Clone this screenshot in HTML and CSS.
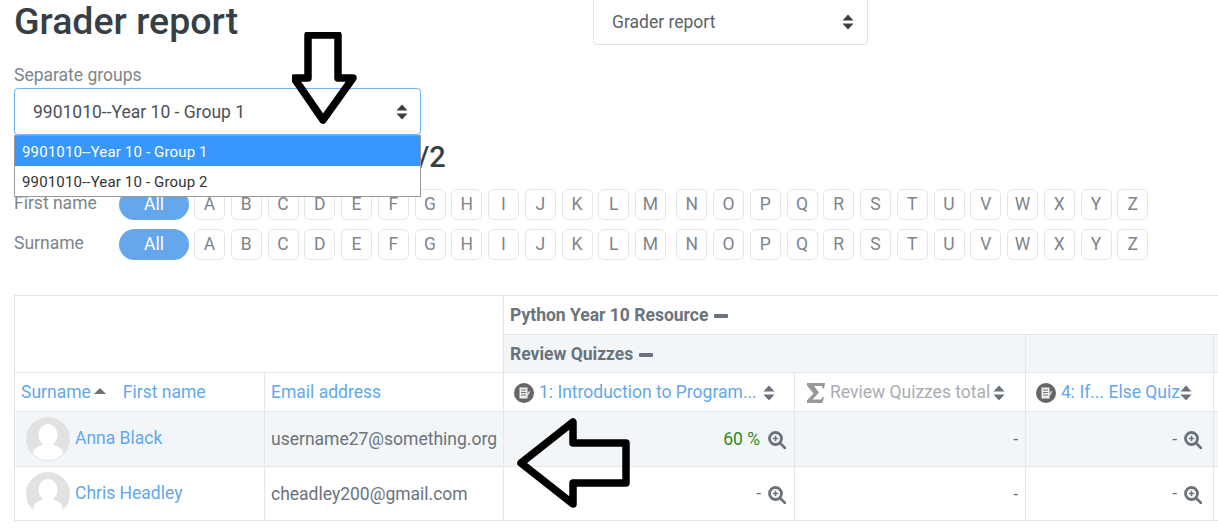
FILE: index.html
```html
<!DOCTYPE html>
<html lang="en">
<head>
<meta charset="utf-8">
<title>Grader report</title>
<link rel="stylesheet" href="styles.css">
</head>
<body>
<svg class="defs" width="0" height="0">
  <defs>
    <symbol id="sort" viewBox="0 0 12 16"><path d="M6 0.5 11.5 6.5H0.5ZM6 15.5 0.5 9.5H11.5Z"/></symbol>
    <symbol id="zoom" viewBox="0 0 18 18"><circle cx="7.5" cy="7.5" r="6" fill="none" stroke="#6a737b" stroke-width="2.800"/><path d="M12 12 17 17" stroke="#6a737b" stroke-width="2.600" stroke-linecap="round"/><path d="M7.500 4.800v5.400M4.800 7.500h5.400" stroke="#6a737b" stroke-width="1.600"/></symbol>
    <symbol id="quiz" viewBox="0 0 20 20"><circle cx="10" cy="10" r="10" fill="#666"/><path d="M5.500 4.500h8v11h-8z" fill="#eee"/><path d="M7 7h5M7 9.500h5M7 12h5" stroke="#777" stroke-width="1.200"/><path d="M11.500 13.500 15 8l1.300.8-3.500 5.500z" fill="#ddd"/></symbol>
    <symbol id="sigma" viewBox="0 0 18 20"><path d="M0 0H18L17 5.500H15.500L14.800 3H7L12 9.500 5.500 16.500H14L15.500 14H17L15.500 20H0V17.200L6.500 10.500 0 2.500Z"/></symbol>
    <symbol id="avatar" viewBox="0 0 44 44"><circle cx="22" cy="22" r="22" fill="#e2e2e2"/><ellipse cx="22" cy="18" rx="9.500" ry="11" fill="#fff"/><path d="M7 37c0-6 7-10 15-10s15 4 15 10a22 22 0 0 1-30 0z" fill="#fff"/></symbol>
  </defs>
</svg>

<div class="page">
  <header class="top">
    <h1>Grader report</h1>
    <div class="report-select">Grader report <svg class="sort dark"><use href="#sort"/></svg></div>
  </header>

  <div class="group-block">
    <div class="group-label">Separate groups</div>
    <div class="group-select">9901010--Year 10 - Group 1 <svg class="sort dark"><use href="#sort"/></svg></div>
    <ul class="group-menu">
      <li class="on">9901010--Year 10 - Group 1</li>
      <li>9901010--Year 10 - Group 2</li>
    </ul>
  </div>

  <h2>/2</h2>

  <div class="initials first">
    <span class="init-label">First name</span>
    <a class="all">All</a>
    <span class="letters"><a>A</a><a>B</a><a>C</a><a>D</a><a>E</a><a>F</a><a>G</a><a>H</a><a>I</a><a>J</a><a>K</a><a>L</a><a>M</a><a>N</a><a>O</a><a>P</a><a>Q</a><a>R</a><a>S</a><a>T</a><a>U</a><a>V</a><a>W</a><a>X</a><a>Y</a><a>Z</a></span>
  </div>
  <div class="initials">
    <span class="init-label">Surname</span>
    <a class="all">All</a>
    <span class="letters"><a>A</a><a>B</a><a>C</a><a>D</a><a>E</a><a>F</a><a>G</a><a>H</a><a>I</a><a>J</a><a>K</a><a>L</a><a>M</a><a>N</a><a>O</a><a>P</a><a>Q</a><a>R</a><a>S</a><a>T</a><a>U</a><a>V</a><a>W</a><a>X</a><a>Y</a><a>Z</a></span>
  </div>

  <div class="table-wrap">
    <table class="grades">
      <colgroup><col class="c1"><col class="c2"><col class="c3"><col class="c4"><col class="c5"><col class="c6"></colgroup>
      <tr class="r1">
        <td colspan="2" rowspan="2"></td>
        <th colspan="4" class="cat">Python Year 10 Resource <span class="minus"></span></th>
      </tr>
      <tr class="r2 shade">
        <th colspan="2" class="cat">Review Quizzes <span class="minus"></span></th>
        <th></th><th></th>
      </tr>
      <tr class="r3">
        <td class="names"><a>Surname</a><i class="up"></i><a class="fn">First name</a></td>
        <td><a>Email address</a></td>
        <td class="item"><svg class="qi"><use href="#quiz"/></svg><a>1: Introduction to Program...</a><svg class="sort s1"><use href="#sort"/></svg></td>
        <td class="item total"><svg class="sigma"><use href="#sigma"/></svg><span class="muted">Review Quizzes total</span><svg class="sort s2"><use href="#sort"/></svg></td>
        <td class="item"><svg class="qi"><use href="#quiz"/></svg><a>4: If... Else Quiz</a><svg class="sort s3"><use href="#sort"/></svg></td>
        <td></td>
      </tr>
      <tr class="r4 shade">
        <td class="user"><svg class="av"><use href="#avatar"/></svg><a>Anna Black</a></td>
        <td>username27@something.org</td>
        <td class="grade"><span class="pass">60 %</span><svg class="zm"><use href="#zoom"/></svg></td>
        <td class="grade plain">-</td>
        <td class="grade wide">-<svg class="zm"><use href="#zoom"/></svg></td>
        <td></td>
      </tr>
      <tr class="r5">
        <td class="user"><svg class="av cut" viewBox="0 0 44 38"><use href="#avatar" width="44" height="44"/></svg><a>Chris Headley</a></td>
        <td>cheadley200@gmail.com</td>
        <td class="grade">-<svg class="zm"><use href="#zoom"/></svg></td>
        <td class="grade plain">-</td>
        <td class="grade wide">-<svg class="zm"><use href="#zoom"/></svg></td>
        <td></td>
      </tr>
    </table>
  </div>
</div>

<svg class="arrow-down" viewBox="0 0 70 96" aria-hidden="true"><path d="M16 3H46V46H61L31 88 2 46H16Z"/></svg>
<svg class="arrow-left" viewBox="0 0 116 90" aria-hidden="true"><path d="M4 45 56 4V25H109V65H56V86Z"/></svg>
</body>
</html>
```
FILE: styles.css
```css
* { box-sizing: border-box; }
html, body { margin: 0; height: 528px; overflow: hidden; background: #fff; }
body { font-family: Roboto, "Liberation Sans", sans-serif; font-size: 17.500px; color: #6a737b; position: relative; }
.defs { position: absolute; }
a { color: #64a7ec; }
.page { padding-left: 14px; }

.top { display: flex; height: 46px; align-items: flex-start; }
h1 { margin: 0; width: 579px; font-size: 37.500px; line-height: 43px; font-weight: 500; color: #373f46; }
.report-select { width: 275px; height: 46px; margin-top: -1px; padding: 0 13px 0 18px; border: 1px solid #dfe3e6; border-radius: 0 0 4px 4px; display: flex; align-items: center; justify-content: space-between; color: #5a6268; }

.group-block { position: relative; width: 407px; margin-top: 17px; }
.group-label { line-height: 24px; color: #7d858c; }
.group-select { margin-top: 1px; height: 47px; padding: 0 12px 0 18px; border: 1px solid #6cb6fb; border-radius: 4px; display: flex; align-items: center; justify-content: space-between; color: #4a5157; box-shadow: 0 0 1px #a9d4fd; }
.group-menu { position: absolute; z-index: 2; left: 0; top: 72px; width: 407px; margin: 0; padding: 0; list-style: none; background: #fff; border: 1px solid #9a9a9a; font-size: 15px; letter-spacing: .15px; color: #333; }
.group-menu li { height: 30px; line-height: 32px; padding-left: 7px; }
.group-menu li.on { background: #3797fe; color: #fff; }
.sort { width: 12px; height: 16px; flex: none; fill: #6a737b; }
.sort.dark { fill: #3a3f44; }

h2 { margin: 0; padding-left: 404px; font-size: 29px; line-height: 34px; height: 54px; padding-top: 5px; font-weight: 500; color: #373f46; }

.initials { display: flex; align-items: center; height: 31px; margin-bottom: 9px; }
.init-label { width: 105px; color: #7d858c; position: relative; top: -2px; }
.all { width: 70px; height: 31px; line-height: 31px; border-radius: 16px; background: #64a7ec; color: #fff; text-align: center; }
.letters { display: flex; gap: 5.760px; margin-left: 5px; }
.letters a { width: 31px; height: 31px; line-height: 29px; text-align: center; border: 1px solid #e3e7ea; border-radius: 6px; color: #7d858c; }
.letters a:nth-child(13) { margin-right: 4.500px; }

.table-wrap { margin-top: 35px; overflow: hidden; width: 1204px; }
.grades { border-collapse: collapse; table-layout: fixed; width: 1250px; }
.c1 { width: 250px; } .c2 { width: 239px; } .c3 { width: 291px; } .c4 { width: 231px; } .c5 { width: 188px; } .c6 { width: 51px; }
.grades td, .grades th { border: 1px solid #e3e7ea; padding: 0 6px; white-space: nowrap; overflow: hidden; text-align: left; font-weight: 400; }
.r1 { height: 39px; } .r2 { height: 38px; } .r3 { height: 39px; } .r4 { height: 55px; } .r5 { height: 54px; }
.shade td, .shade th { background: #f3f6f9; }
.grades th.cat { font-weight: 700; }
.minus { display: inline-block; width: 14px; height: 4px; background: #6a737b; vertical-align: middle; margin-left: 1px; border-radius: 1px; }
.up { display: inline-block; width: 0; height: 0; border: 6px solid transparent; border-top: 0; border-bottom: 6px solid #6a737b; margin: 0 0 4px 3px; vertical-align: middle; }
.fn { margin-left: 17px; }
.item { padding-left: 10px !important; }
.item > * { vertical-align: middle; }
.qi { width: 20px; height: 20px; margin-right: 5px; }
.s1 { margin-left: 6px; }
.s2 { margin-left: 3px; }
.s3 { margin-left: 0; }
.sigma { width: 18px; height: 20px; fill: #999; margin-right: 5px; margin-left: 2px; }
.muted { color: #a8adb2; }
.grade { text-align: right !important; padding-right: 8px !important; }
.grade.wide { padding-right: 11px !important; }
.grade .zm { width: 18px; height: 18px; margin-left: 7px; vertical-align: middle; }
.grade.plain { padding-right: 7px !important; }
.pass { color: #2c8a1c; }
.pass + .zm { margin-left: 8px !important; }
.user { padding-left: 11px !important; }
.av { width: 44px; height: 44px; margin-right: 5px; vertical-align: middle; }
.av.cut { height: 38px; margin-bottom: 6px; }

.arrow-down, .arrow-left { position: absolute; z-index: 5; fill: none; stroke: #000; stroke-width: 7.500; stroke-linejoin: round; }
.arrow-down { left: 292px; top: 32px; width: 70px; height: 96px; }
.arrow-left { left: 517px; top: 418px; width: 116px; height: 90px; }
```
